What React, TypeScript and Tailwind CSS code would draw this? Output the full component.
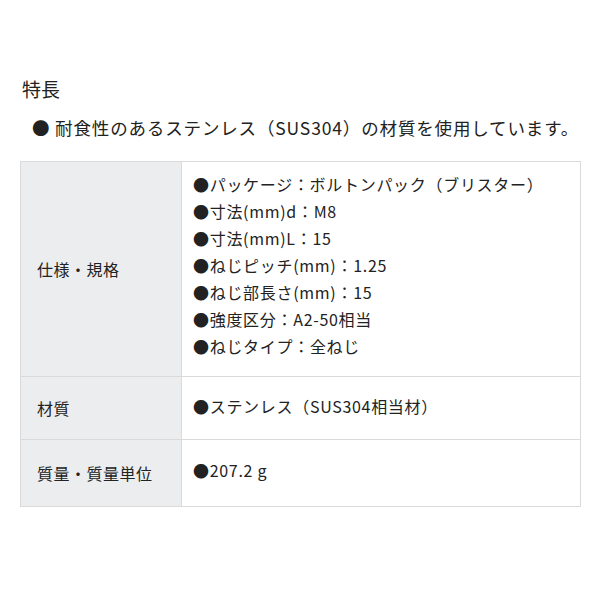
import React from 'react';

const specLines = [
  '●パッケージ：ボルトンパック（ブリスター）',
  '●寸法(mm)d：M8',
  '●寸法(mm)L：15',
  '●ねじピッチ(mm)：1.25',
  '●ねじ部長さ(mm)：15',
  '●強度区分：A2-50相当',
  '●ねじタイプ：全ねじ',
];

const rows: { label: string; lines: string[]; pad: string }[] = [
  { label: '仕様・規格', lines: specLines, pad: 'pt-[9px] pb-[16px]' },
  { label: '材質', lines: ['●ステンレス（SUS304相当材）'], pad: 'pt-[16px] pb-[19px]' },
  { label: '質量・質量単位', lines: ['●207.2 g'], pad: 'pt-[17px] pb-[22px]' },
];

export default function App() {
  return (
    <div
      className="w-[600px] h-[600px] bg-white text-[#222] pt-[76px] px-5"
      style={{ fontFamily: '"Noto Sans CJK JP", "Noto Sans", sans-serif' }}
    >
      <h2 className="text-[19px] leading-[26px] pl-[2px] font-normal">特長</h2>
      <p className="mt-[13px] pl-[12px] text-[17.5px] leading-[26px] tracking-[0.85px]">
        ● 耐食性のあるステンレス（SUS304）の材質を使用しています。
      </p>

      <table className="mt-[20px] w-[561px] border-collapse text-[16px]">
        <tbody>
          {rows.map((row) => (
            <tr key={row.label}>
              <th className="w-[161px] bg-[#ecedef] border border-[#dadada] pl-[16px] text-left font-normal align-middle tracking-[0.5px]">
                {row.label}
              </th>
              <td className={`border border-[#dadada] pl-[11px] align-middle tracking-[0.7px] ${row.pad}`}>
                {row.lines.map((line) => (
                  <div key={line} className="leading-[27px]">
                    {line}
                  </div>
                ))}
              </td>
            </tr>
          ))}
        </tbody>
      </table>
    </div>
  );
}
